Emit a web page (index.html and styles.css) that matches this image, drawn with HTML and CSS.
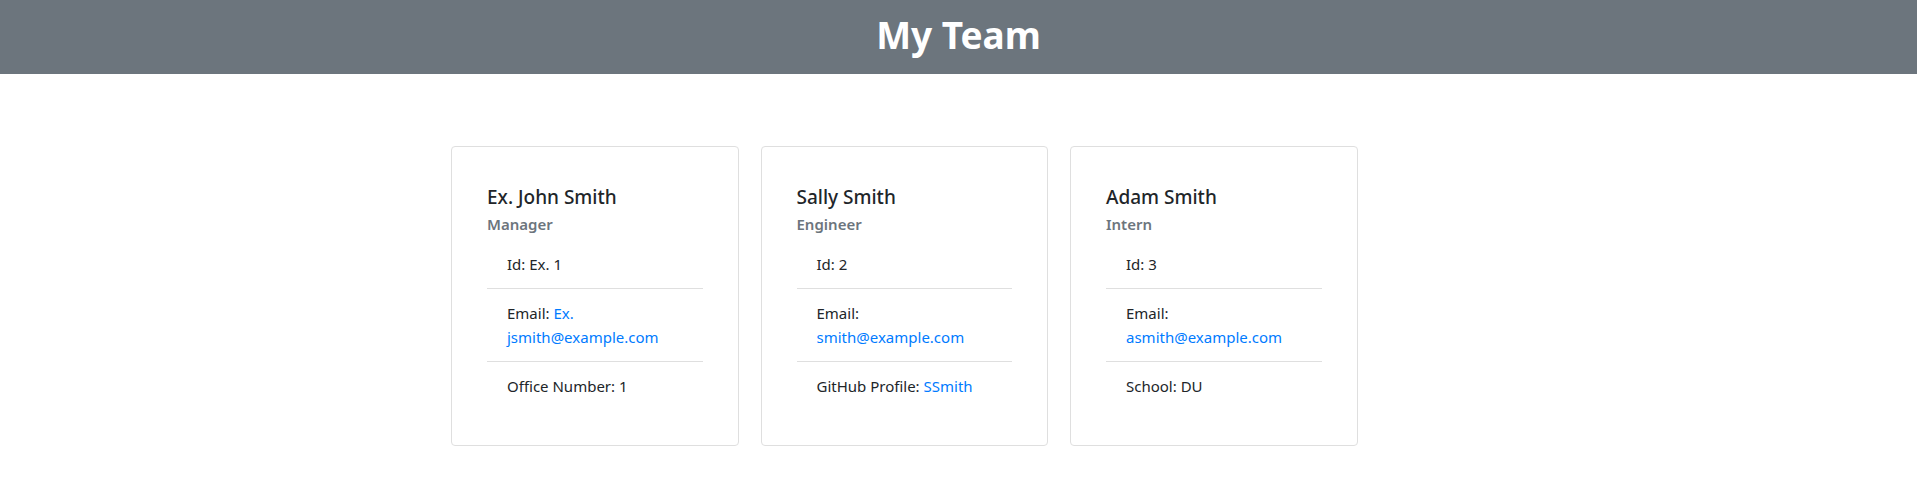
FILE: index.html
```html
<!DOCTYPE html>
<html lang="en">
<head>
<meta charset="utf-8">
<title>My Team</title>
<link rel="stylesheet" href="styles.css">
</head>
<body>
<header class="banner"><h1 class="banner-title">My Team</h1></header>
<main class="team">
  <section class="card">
    <h5 class="card-title">Ex. John Smith</h5>
    <h6 class="card-subtitle">Manager</h6>
    <ul class="list">
      <li class="item">Id: Ex. 1</li>
      <li class="item">Email: <a class="link" href="#">Ex. jsmith@example.com</a></li>
      <li class="item">Office Number: 1</li>
    </ul>
  </section>
  <section class="card">
    <h5 class="card-title">Sally Smith</h5>
    <h6 class="card-subtitle">Engineer</h6>
    <ul class="list">
      <li class="item">Id: 2</li>
      <li class="item">Email: <a class="link" href="#">smith@example.com</a></li>
      <li class="item">GitHub Profile: <a class="link" href="#">SSmith</a></li>
    </ul>
  </section>
  <section class="card">
    <h5 class="card-title">Adam Smith</h5>
    <h6 class="card-subtitle">Intern</h6>
    <ul class="list">
      <li class="item">Id: 3</li>
      <li class="item">Email: <a class="link" href="#">asmith@example.com</a></li>
      <li class="item">School: DU</li>
    </ul>
  </section>
</main>
</body>
</html>
```
FILE: styles.css
```css
* { box-sizing: border-box; }
html, body { margin: 0; padding: 0; background: #fff; }
body {
  font-family: "Noto Sans", "Open Sans", sans-serif;
  font-size: 16px;
  line-height: 1.5;
  color: #212529;
}
.banner {
  background: #6c757d;
  height: 74px;
  display: flex;
  align-items: center;
  justify-content: center;
}
.banner-title {
  margin: 0;
  color: #fff;
  font-size: 37px;
  font-weight: 700;
  line-height: 1.2;
  padding-bottom: 4px;
}
.team {
  display: flex;
  gap: 22px;
  padding: 72px 0 0 451px;
}
.card {
  width: 287.5px;
  height: 300px;
  border: 1px solid #dfdfdf;
  border-radius: 4px;
  padding: 39px 35px 35px 35px;
}
.card-title {
  margin: 0 0 4px;
  font-size: 19px;
  font-weight: 500;
  line-height: 1.2;
}
.card-subtitle {
  margin: 0 0 5px;
  font-size: 15px;
  font-weight: 600;
  line-height: 1.5;
  color: #6c757d;
}
.list {
  list-style: none;
  margin: 0;
  padding: 0;
}
.item {
  padding: 12px 20px;
  font-size: 15px;
  line-height: 24px;
  border-top: 1px solid #dfdfdf;
}
.item:first-child { border-top: 0; }
.link { color: #007bff; text-decoration: none; }
```
